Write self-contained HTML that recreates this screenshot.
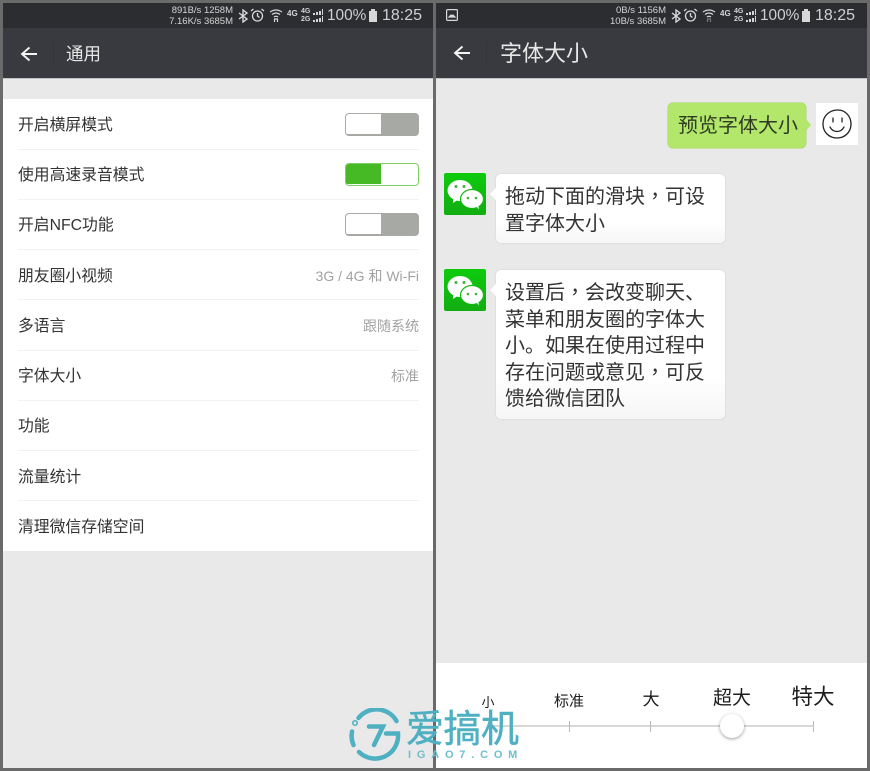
<!DOCTYPE html>
<html><head><meta charset="utf-8"><style>
html,body{margin:0;padding:0;background:#6a6a6a}
#r{position:relative;width:870px;height:771px;overflow:hidden;background:#6a6a6a;font-family:"Liberation Sans","Noto Sans CJK SC",sans-serif;color:#222}
#r div,#r svg{position:absolute}
.t{white-space:nowrap;filter:blur(.35px)}
.p{background:#e9e9e9;top:3px;height:765px}
.sb{background:#2c2d31;height:25px;top:3px}
.tb{background:#393a3f;height:50px;top:28px;border-bottom:1px solid #c4c4c4}
.l{left:18px;font-size:15.8px;line-height:24px;color:#333}
.v{right:451px;font-size:14px;line-height:20px;color:#a2a2a2}
.s{left:18px;width:401px;height:1px;background:#f2f2f2}
.sw{left:345px;width:74px;height:23px;box-sizing:border-box;border:1.5px solid #a6a9a4;border-radius:4px;background:#a6a9a4;overflow:hidden}
.st{color:#d4d4d4;font-size:9.5px;line-height:11px;text-align:right}
.big{color:#d0d0d0;font-size:16px;line-height:20px}
.pc{color:#d0d0d0;font-size:15.4px;line-height:20px}
.b{left:496px;width:229px;background:linear-gradient(#fff 70%,#f6f6f6);border-radius:5px;box-shadow:0 0 0 1px #e0e0e0,0 1px 1px #d8d8d8}
.bt{left:505px;font-size:20px;line-height:26.6px;color:#333;white-space:nowrap}
.tc{font-family:"Noto Sans CJK TC",sans-serif;line-height:0}
.tick{width:1px;height:11px;top:721px;background:#bbb}
.c{color:#1c1c1c;transform:translateX(-50%);white-space:nowrap}
</style></head><body><div id="r">
<div class="p" style="left:3px;width:430px"></div>
<div class="p" style="left:436px;width:431px"></div>

<div class="sb" style="left:3px;width:430px"></div>
<div class="tb" style="left:3px;width:430px"></div>
<div class="sb" style="left:436px;width:431px"></div>
<div class="tb" style="left:436px;width:431px"></div>

<!-- status left -->
<div class="t st" style="right:637px;top:5px">891B/s 1258M<br>7.16K/s 3685M</div>
<svg style="left:237px;top:9px" width="12" height="14" viewBox="0 0 12 14" fill="none" stroke="#d8d8d8" stroke-width="1.4"><path d="M2 4l8 6-4 3V1l4 3-8 6"/></svg>
<svg style="left:250px;top:8px" width="15" height="15" viewBox="0 0 15 15" fill="none" stroke="#d8d8d8" stroke-width="1.3"><circle cx="7.5" cy="8" r="5"/><path d="M7.5 5v3l2 1.5M1 3l2.5-2M14 3l-2.5-2"/></svg>
<svg style="left:269px;top:8px" width="14" height="15" viewBox="0 0 14 15" fill="none" stroke="#d8d8d8" stroke-width="1.2"><path d="M1 4q6-4 12 0M3 6.5q4-3 8 0M5 9q2-1.5 4 0"/><path d="M5 11h4M5.5 11v3M8.5 11v3"/></svg>
<div class="t" style="left:287px;top:9px;color:#d4d4d4;font-size:8px;font-weight:bold;line-height:10px">4G</div>
<div class="t" style="left:301px;top:8px;color:#d4d4d4;font-size:7px;font-weight:bold;line-height:8px">4G<br>2G</div>
<svg style="left:313px;top:9px" width="10" height="14" viewBox="0 0 10 14" fill="#d4d4d4"><path d="M0 4h2v2H0zM3 3h2v3H3zM6 2h2v4H6zM9 0h1v6H9zM0 11h2v2H0zM3 10h2v3H3zM6 9h2v4H6zM9 7h1v6H9z"/></svg>
<div class="t pc" style="left:327px;top:6px">100%</div>
<div style="left:369px;top:11px;width:8px;height:11px;background:#d8d8d8"></div><div style="left:371px;top:9px;width:4px;height:2px;background:#d8d8d8"></div>
<div class="t big" style="left:382px;top:6px">18:25</div>

<!-- status right -->
<svg style="left:446px;top:9px" width="12" height="12" viewBox="0 0 12 12" fill="none" stroke="#d8d8d8" stroke-width="1.2"><rect x=".6" y=".6" width="10.8" height="10.8" rx="1"/><path d="M3 8l2-2 1 1 1-1 2 2z" fill="#d8d8d8"/></svg>
<div class="t st" style="right:204px;top:5px">0B/s 1156M<br>10B/s 3685M</div>
<svg style="left:670px;top:9px" width="12" height="14" viewBox="0 0 12 14" fill="none" stroke="#d8d8d8" stroke-width="1.4"><path d="M2 4l8 6-4 3V1l4 3-8 6"/></svg>
<svg style="left:683px;top:8px" width="15" height="15" viewBox="0 0 15 15" fill="none" stroke="#d8d8d8" stroke-width="1.3"><circle cx="7.5" cy="8" r="5"/><path d="M7.5 5v3l2 1.5M1 3l2.5-2M14 3l-2.5-2"/></svg>
<svg style="left:702px;top:8px" width="14" height="15" viewBox="0 0 14 15" fill="none" stroke="#d8d8d8" stroke-width="1.2"><path d="M1 4q6-4 12 0M3 6.5q4-3 8 0M5 9q2-1.5 4 0"/><path d="M5 11h4M5.5 11v3M8.5 11v3" stroke="#777"/></svg>
<div class="t" style="left:720px;top:9px;color:#d4d4d4;font-size:8px;font-weight:bold;line-height:10px">4G</div>
<div class="t" style="left:734px;top:8px;color:#d4d4d4;font-size:7px;font-weight:bold;line-height:8px">4G<br>2G</div>
<svg style="left:746px;top:9px" width="10" height="14" viewBox="0 0 10 14" fill="#d4d4d4"><path d="M0 4h2v2H0zM3 3h2v3H3zM6 2h2v4H6zM9 0h1v6H9zM0 11h2v2H0zM3 10h2v3H3zM6 9h2v4H6zM9 7h1v6H9z"/></svg>
<div class="t pc" style="left:760px;top:6px">100%</div>
<div style="left:802px;top:11px;width:8px;height:11px;background:#d8d8d8"></div><div style="left:804px;top:9px;width:4px;height:2px;background:#d8d8d8"></div>
<div class="t big" style="left:815px;top:6px">18:25</div>

<!-- toolbars -->
<svg style="left:20px;top:45px" width="18" height="18" viewBox="0 0 18 18" fill="none" stroke="#f4f4f4" stroke-width="1.9"><path d="M17 9H2M9.5 2.5L2 9l7.5 6.5"/></svg>
<div style="left:53px;top:42px;width:1px;height:24px;background:#33343a"></div>
<div class="t" style="left:66px;top:42px;font-size:17.5px;line-height:24px;color:#e8e8e8">通用</div>
<svg style="left:453px;top:44px" width="18" height="18" viewBox="0 0 18 18" fill="none" stroke="#f4f4f4" stroke-width="1.9"><path d="M17 9H2M9.5 2.5L2 9l7.5 6.5"/></svg>
<div style="left:486px;top:42px;width:1px;height:24px;background:#33343a"></div>
<div class="t" style="left:500px;top:39px;font-size:22px;line-height:30px;color:#e8e8e8">字体大小</div>

<!-- list -->
<div style="left:3px;top:99px;width:430px;height:452px;background:#fff"></div>
<div class="t l" style="top:114px">开启横屏模式</div>
<div class="t l" style="top:164px">使用高速录音模式</div>
<div class="t l" style="top:214px">开启NFC功能</div>
<div class="t l" style="top:265px">朋友圈小视频</div>
<div class="t l" style="top:315px">多语言</div>
<div class="t l" style="top:365px">字体大小</div>
<div class="t l" style="top:415px">功能</div>
<div class="t l" style="top:466px">流量统计</div>
<div class="t l" style="top:516px">清理微信存储空间</div>
<div class="s" style="top:149px"></div><div class="s" style="top:199px"></div><div class="s" style="top:249px"></div><div class="s" style="top:299px"></div><div class="s" style="top:350px"></div><div class="s" style="top:400px"></div><div class="s" style="top:450px"></div><div class="s" style="top:500px"></div>
<div class="t v" style="top:266px">3G / 4G 和 Wi-Fi</div>
<div class="t v" style="top:316px">跟随系统</div>
<div class="t v" style="top:366px">标准</div>

<div class="sw" style="top:113px"><div style="left:0;top:0;width:35px;height:20px;background:#fff"></div></div>
<div class="sw" style="top:163px;background:#fff;border-color:#7fd063"><div style="left:0;top:0;width:35px;height:20px;background:#46ba24"></div></div>
<div class="sw" style="top:213px"><div style="left:0;top:0;width:35px;height:20px;background:#fff"></div></div>

<!-- chat -->
<div style="left:668px;top:103px;width:138px;height:45px;background:#b2e76c;border-radius:5px;box-shadow:0 0 0 .5px #a3d267"></div>
<svg style="left:805px;top:118px" width="7" height="14" viewBox="0 0 7 14"><path d="M0 0l6 7-6 7z" fill="#b2e76c"/></svg>
<div class="t bt" style="left:678px;top:113px;color:#2f3a22">预览字体大小</div>
<div style="left:816px;top:103px;width:42px;height:42px;background:#fff"></div>
<svg style="left:816px;top:103px" width="42" height="42" viewBox="0 0 42 42" fill="none" stroke="#222" stroke-width="1.3" stroke-linecap="round"><path d="M21 7c8-.5 14 6 14 14s-6 14-14 14S7 29 7 21 13 7.5 21 7z"/><path d="M17 15v4M26 15v4M14 24c3 6 11 6 14 0"/></svg>

<svg style="left:444px;top:173px" width="42" height="42" viewBox="0 0 42 42"><defs><linearGradient id="g" x1="0" y1="0" x2="0" y2="1"><stop offset="0" stop-color="#0dcb0d"/><stop offset="1" stop-color="#12ad12"/></linearGradient><g id="wx"><rect width="42" height="42" rx="2" fill="url(#g)"/><ellipse cx="16" cy="17.5" rx="12.5" ry="10.5" fill="#fff"/><path d="M9 24l0 6 6-4z" fill="#fff"/><ellipse cx="28" cy="26" rx="11.5" ry="9.5" fill="#fff" stroke="#12b812" stroke-width="1.2"/><path d="M32 33l3 3.5-1-6z" fill="#fff"/><circle cx="12" cy="13.5" r="1.5" fill="#3cb43c"/><circle cx="20" cy="13.5" r="1.5" fill="#3cb43c"/><circle cx="24" cy="25" r="1.3" fill="#3cb43c"/><circle cx="32" cy="25" r="1.3" fill="#3cb43c"/></g></defs><use href="#wx"/></svg>
<svg style="left:444px;top:269px" width="42" height="42" viewBox="0 0 42 42"><use href="#wx"/></svg>

<div class="b" style="top:174px;height:69px"></div>
<svg style="left:490px;top:187px" width="7" height="14" viewBox="0 0 7 14"><path d="M7 0L0 7l7 7z" fill="#fff"/></svg>
<div class="t bt" style="top:184px">拖动下面的滑块<span class="tc">，</span>可设<br>置字体大小</div>
<div class="b" style="top:270px;height:149px"></div>
<svg style="left:490px;top:283px" width="7" height="14" viewBox="0 0 7 14"><path d="M7 0L0 7l7 7z" fill="#fff"/></svg>
<div class="t bt" style="top:280px">设置后<span class="tc">，</span>会改变聊天、<br>菜单和朋友圈的字体大<br>小。如果在使用过程中<br>存在问题或意见<span class="tc">，</span>可反<br>馈给微信团队</div>

<!-- slider -->
<div style="left:436px;top:663px;width:431px;height:105px;background:#fff"></div>
<div class="t c" style="left:488px;top:694px;font-size:13px;line-height:17px">小</div>
<div class="t c" style="left:569px;top:692px;font-size:15px;line-height:20px">标准</div>
<div class="t c" style="left:651px;top:688px;font-size:17px;line-height:24px">大</div>
<div class="t c" style="left:732px;top:685px;font-size:19px;line-height:27px">超大</div>
<div class="t c" style="left:813px;top:682px;font-size:21.5px;line-height:30px">特大</div>
<div style="left:488px;top:725px;width:325px;height:2px;background:#d8d8d8"></div>
<div class="tick" style="left:569px"></div><div class="tick" style="left:650px"></div><div class="tick" style="left:813px"></div>
<div style="left:720px;top:714px;width:24px;height:24px;border-radius:50%;background:#fff;box-shadow:0 1px 3px rgba(0,0,0,.4)"></div>

<!-- watermark -->
<svg style="left:347px;top:708px" width="56" height="54" viewBox="0 0 56 54" fill="none" stroke="#4fb0c2" stroke-width="4.5" stroke-linecap="round"><path d="M11.5 10A23 23 0 0 1 49.500 13"/><path d="M39 25.500H51A23 23 0 0 1 12 44"/><path d="M5 23.500A23 23 0 0 0 6.500 37"/><circle cx="8" cy="15" r=".8"/><path d="M22 18.500H36L27 37" stroke-width="4.5"/></svg>
<div class="t" style="left:406px;top:708px;font-size:38px;line-height:44px;color:#4fb0c2;letter-spacing:-.5px;-webkit-text-stroke:.5px #4fb0c2">爱搞机</div>
<div class="t" style="left:408px;top:749px;font-size:11px;line-height:12px;font-weight:bold;color:#6fbfcd;letter-spacing:5.8px">IGAO7.COM</div>
</div></body></html>
